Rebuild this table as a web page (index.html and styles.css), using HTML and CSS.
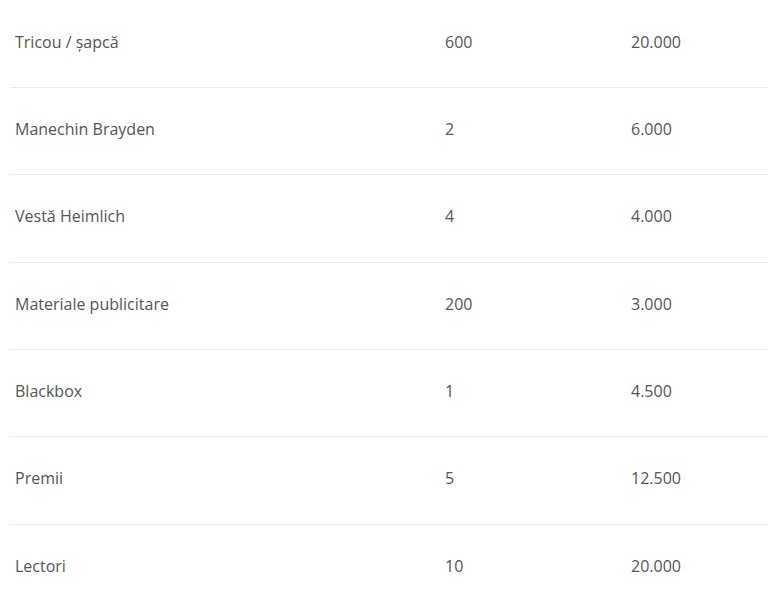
FILE: index.html
```html
<!DOCTYPE html>
<html lang="ro">
<head>
<meta charset="utf-8">
<link rel="stylesheet" href="styles.css">
</head>
<body>
<div class="table">
  <div class="row"><div class="cell">Tricou / șapcă</div><div class="cell">600</div><div class="cell">20.000</div></div>
  <div class="row"><div class="cell">Manechin Brayden</div><div class="cell">2</div><div class="cell">6.000</div></div>
  <div class="row"><div class="cell">Vestă Heimlich</div><div class="cell">4</div><div class="cell">4.000</div></div>
  <div class="row"><div class="cell">Materiale publicitare</div><div class="cell">200</div><div class="cell">3.000</div></div>
  <div class="row"><div class="cell">Blackbox</div><div class="cell">1</div><div class="cell">4.500</div></div>
  <div class="row"><div class="cell">Premii</div><div class="cell">5</div><div class="cell">12.500</div></div>
  <div class="row"><div class="cell">Lectori</div><div class="cell">10</div><div class="cell">20.000</div></div>
</div>
</body>
</html>
```
FILE: styles.css
```css
html, body {
  margin: 0;
  padding: 0;
  background: #fff;
}
body {
  font-family: "Open Sans", "Liberation Sans", sans-serif;
  font-size: 16px;
  color: #555;
  overflow: hidden;
}
.table {
  margin: 0.67px 0 0 10px;
}
.row {
  display: grid;
  grid-template-columns: 430px 186px 1fr;
  align-items: center;
  height: 86.33px;
  border-bottom: 1px solid #e9e9e9;
}
.cell {
  padding-left: 5px;
  padding-bottom: 4px;
  line-height: 20px;
}
```
